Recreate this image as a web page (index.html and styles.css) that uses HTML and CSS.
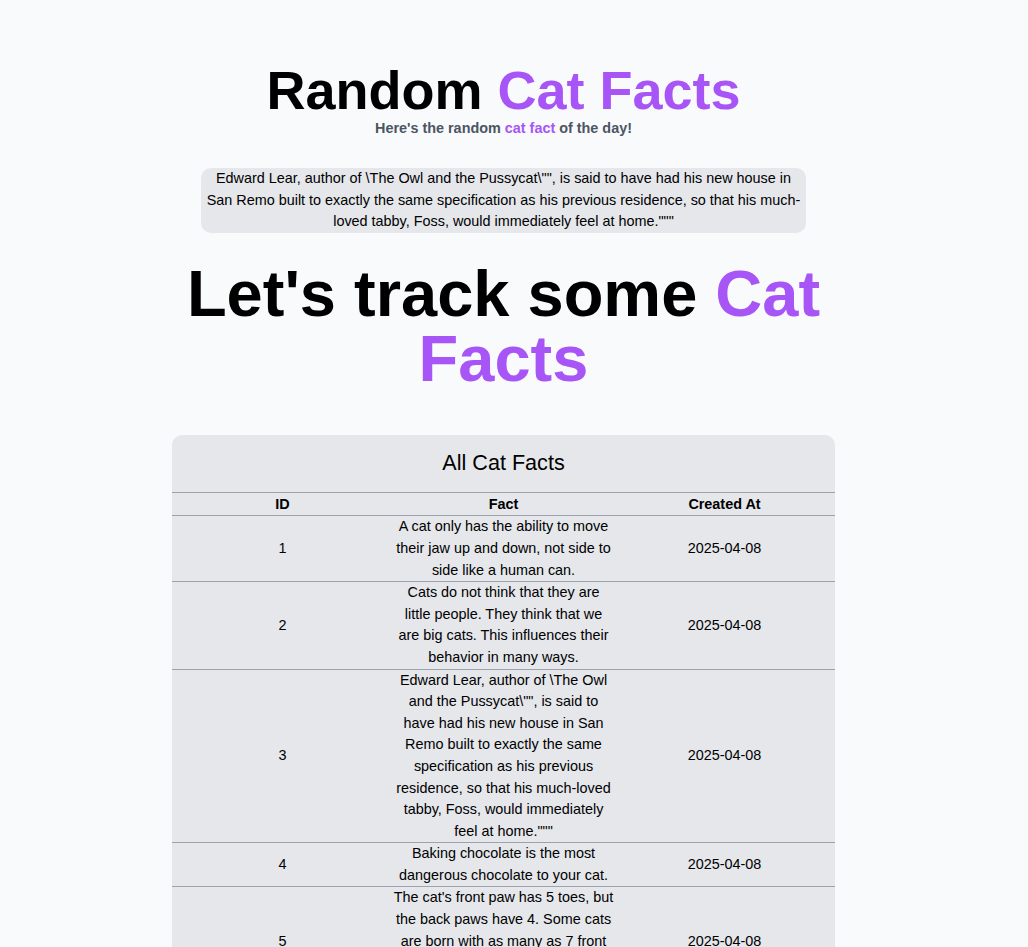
FILE: index.html
```html
<!DOCTYPE html>
<html lang="en">
<head>
<meta charset="utf-8">
<title>Random Cat Facts</title>
<link rel="stylesheet" href="styles.css">
</head>
<body>
<main class="page">
  <header class="hero">
    <h1 class="title">Random <span class="accent">Cat Facts</span></h1>
    <p class="subtitle">Here's the random <span class="accent">cat fact</span> of the day!</p>
  </header>
  <p class="fact-box">Edward Lear, author of \The Owl and the Pussycat\"", is said to have had his new house in San Remo built to exactly the same specification as his previous residence, so that his much-loved tabby, Foss, would immediately feel at home."""</p>
  <h2 class="track">Let's track some <span class="accent">Cat</span> <span class="accent">Facts</span></h2>
  <section class="table-card">
    <table class="facts">
      <caption>All Cat Facts</caption>
      <thead>
        <tr><th>ID</th><th>Fact</th><th>Created At</th></tr>
      </thead>
      <tbody>
        <tr><td>1</td><td>A cat only has the ability to move their jaw up and down, not side to side like a human can.</td><td>2025-04-08</td></tr>
        <tr><td>2</td><td>Cats do not think that they are little people. They think that we are big cats. This influences their behavior in many ways.</td><td>2025-04-08</td></tr>
        <tr><td>3</td><td>Edward Lear, author of \The Owl and the Pussycat\"", is said to have had his new house in San Remo built to exactly the same specification as his previous residence, so that his much-loved tabby, Foss, would immediately feel at home."""</td><td>2025-04-08</td></tr>
        <tr><td>4</td><td>Baking chocolate is the most dangerous chocolate to your cat.</td><td>2025-04-08</td></tr>
        <tr><td>5</td><td>The cat's front paw has 5 toes, but the back paws have 4. Some cats are born with as many as 7 front toes and extra back toes (polydactl).</td><td>2025-04-08</td></tr>
        <tr><td>6</td><td>Cats have about 130,000 hairs per square inch.</td><td>2025-04-08</td></tr>
      </tbody>
    </table>
  </section>
</main>
</body>
</html>
```

FILE: styles.css
```css
html, body {
  margin: 0;
  padding: 0;
  background: #f9fafb;
}

body {
  font-family: "Liberation Sans", Arial, sans-serif;
  color: #000;
}

.page {
  width: calc(100% - 21px);
  display: flex;
  flex-direction: column;
  align-items: center;
  padding-top: 63px;
}

.accent {
  color: #a855f7;
}

.hero {
  text-align: center;
}

.title {
  margin: 0;
  font-size: 54px;
  line-height: 1;
  font-weight: 700;
}

.subtitle {
  margin: 1px 0 0;
  font-size: 14.4px;
  line-height: 20px;
  font-weight: 700;
  color: #4b5563;
}

.fact-box {
  margin: 30px 0 0;
  width: 605px;
  box-sizing: border-box;
  padding: 0 4px;
  background: #e5e7eb;
  border-radius: 10px;
  font-size: 14.4px;
  line-height: 21.6px;
  text-align: center;
}

.track {
  margin: 28px 0 0;
  width: 663px;
  font-size: 65px;
  line-height: 1;
  font-weight: 700;
  text-align: center;
}

.table-card {
  margin-top: 44px;
  width: 663px;
  background: #e5e7eb;
  border-radius: 10px;
  overflow: hidden;
}

.facts {
  width: 100%;
  table-layout: fixed;
  border-collapse: collapse;
  font-size: 14.4px;
  line-height: 21.6px;
  text-align: center;
}

.facts caption {
  padding: 15px 0 16px;
  font-size: 21.6px;
  line-height: 26px;
}

.facts th,
.facts td {
  padding: 0;
  border-top: 1px solid #9ca3af;
  border-bottom: 1px solid #9ca3af;
  vertical-align: middle;
}

.facts th {
  font-weight: 700;
  line-height: 22.6px;
}
```
